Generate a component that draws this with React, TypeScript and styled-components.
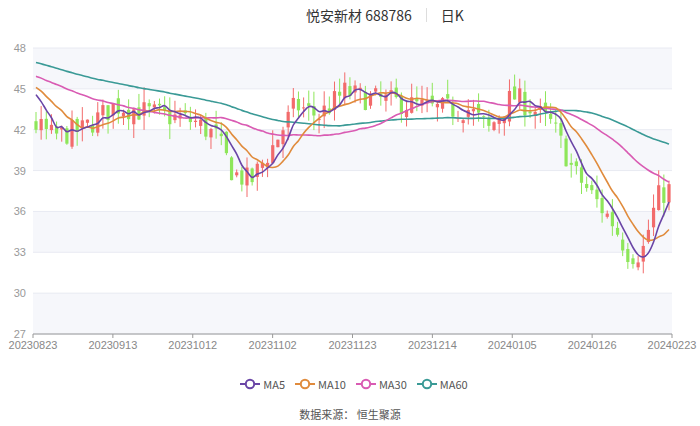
import React from "react";
import styled, { createGlobalStyle } from "styled-components";

const Global = createGlobalStyle`
  body { margin: 0; background: #fff; font-family: "Noto Sans CJK SC", "Liberation Sans", sans-serif; }
`;
const Page = styled.div`width:700px;height:426px;position:relative;overflow:hidden;`;
const Title = styled.div`
  height:30px;display:flex;align-items:center;justify-content:center;gap:14px;
  padding-left:70px;font-size:14px;color:#333;
`;
const Sep = styled.span`width:1px;height:14px;background:#ddd;`;
const Chart = styled.svg`display:block;`;
const Legend = styled.div`
  display:flex;justify-content:center;gap:10px;margin-top:0;font-size:11px;color:#555;padding-left:8px;
`;
const LegItem = styled.div`display:flex;align-items:center;gap:3px;`;
const Source = styled.div`text-align:center;font-size:11px;color:#555;margin-top:14px;`;

const X0 = 33, X1 = 672;
const yOf = (p: number) => 48 + (48 - p) * (286 / 21);
const N = 124;
const keys: [number, number][] = [
  [33, 42.3], [50, 41.5], [80, 42], [113, 43.8], [150, 43.2], [193, 42.6], [215, 41.5], [232, 38.8], [250, 38.2],
  [274, 41], [295, 43.8], [318, 43], [345, 44.8], [360, 44.4], [400, 44], [434, 43.5], [470, 43.5], [490, 42],
  [514, 44.5], [535, 43.5], [555, 42.3], [575, 39], [594, 37.2], [615, 35.2], [632, 32.8], [645, 33], [660, 37], [672, 37.6],
];
let seed = 7;
const rnd = () => { seed = (seed * 16807) % 2147483647; return seed / 2147483647; };
const base = (i: number) => {
  const x = X0 + (i / (N - 1)) * (X1 - X0);
  for (let k = 0; k < keys.length - 1; k++) {
    if (x >= keys[k][0] && x <= keys[k + 1][0]) {
      const t = (x - keys[k][0]) / (keys[k + 1][0] - keys[k][0]);
      return keys[k][1] + t * (keys[k + 1][1] - keys[k][1]);
    }
  }
  return keys[keys.length - 1][1];
};
const hist: number[] = [];
for (let i = 0; i < 60; i++) hist.push(48.8 - i * 0.06 + (rnd() - 0.5));
const closes: number[] = [];
const candles: { o: number; c: number; h: number; l: number }[] = [];
let prev = 42.6;
for (let i = 0; i < N; i++) {
  const c = base(i) + (rnd() - 0.5) * 1.8;
  const o = prev + (rnd() - 0.5) * 0.8;
  const h = Math.max(o, c) + rnd() * 1.1;
  const l = Math.min(o, c) - rnd() * 1.1;
  candles.push({ o, c, h, l });
  closes.push(c);
  prev = c;
}
const all = [...hist, ...closes];
const ma = (n: number) =>
  closes.map((_, i) => {
    const j = i + 60;
    let s = 0;
    for (let k = j - n + 1; k <= j; k++) s += all[k];
    return s / n;
  });
const xOf = (i: number) => X0 + 3 + (i / (N - 1)) * (X1 - X0 - 6);
const path = (arr: number[]) => {
  const pts = arr.map((v, i) => [xOf(i), yOf(v)]);
  let d = `M${pts[0][0]},${pts[0][1]}`;
  for (let i = 1; i < pts.length; i++) {
    const p0 = pts[Math.max(0, i - 2)], p1 = pts[i - 1], p2 = pts[i], p3 = pts[Math.min(pts.length - 1, i + 1)];
    const c1x = p1[0] + (p2[0] - p0[0]) / 6, c1y = p1[1] + (p2[1] - p0[1]) / 6;
    const c2x = p2[0] - (p3[0] - p1[0]) / 6, c2y = p2[1] - (p3[1] - p1[1]) / 6;
    d += ` C${c1x},${c1y} ${c2x},${c2y} ${p2[0]},${p2[1]}`;
  }
  return d;
};
const lines = [
  { n: 60, color: "#3a9a96", name: "MA60" },
  { n: 30, color: "#d95bb3", name: "MA30" },
  { n: 10, color: "#e08b3c", name: "MA10" },
  { n: 5, color: "#6a45a6", name: "MA5" },
];
const levels = [48, 45, 42, 39, 36, 33, 30, 27];
const dates = ["20230823", "20230913", "20231012", "20231102", "20231123", "20231214", "20240105", "20240126", "20240223"];

export default function App() {
  return (
    <Page>
      <Global />
      <Title>
        <span>悦安新材 688786</span>
        <Sep />
        <span>日K</span>
      </Title>
      <Chart width={700} height={346} viewBox="0 30 700 346">
        {levels.slice(0, -1).map((v, i) => (
          <rect key={v} x={X0} y={yOf(v)} width={X1 - X0} height={yOf(v - 3) - yOf(v)} fill={i % 2 === 0 ? "#f6f7fb" : "#fff"} />
        ))}
        {levels.map((v) => (
          <g key={v}>
            <line x1={X0} x2={X1} y1={yOf(v)} y2={yOf(v)} stroke="#e8eaf2" />
            <text x={26} y={yOf(v) + 4} fontSize={11} fill="#999" textAnchor="end" fontFamily="Liberation Sans">{v}</text>
          </g>
        ))}
        <line x1={X0} x2={X1} y1={yOf(27)} y2={yOf(27)} stroke="#999" />
        {dates.map((d, i) => {
          const x = X0 + i * (X1 - X0) / 8;
          return (
            <g key={d}>
              <line x1={x} x2={x} y1={yOf(27)} y2={yOf(27) + 4} stroke="#999" />
              <text x={x} y={yOf(27) + 15} fontSize={11} fill="#888" textAnchor="middle" fontFamily="Liberation Sans">{d}</text>
            </g>
          );
        })}
        {candles.map((c, i) => {
          const up = c.c >= c.o;
          const col = up ? "#f26b6b" : "#8ee65a";
          const x = xOf(i);
          const top = yOf(Math.max(c.o, c.c));
          const bot = yOf(Math.min(c.o, c.c));
          return (
            <g key={i}>
              <line x1={x} x2={x} y1={yOf(c.h)} y2={yOf(c.l)} stroke={col} strokeWidth={1} />
              <rect x={x - 1.6} y={top} width={3.2} height={Math.max(1, bot - top)} fill={col} />
            </g>
          );
        })}
        {lines.map((l) => (
          <path key={l.n} d={path(ma(l.n))} fill="none" stroke={l.color} strokeWidth={1.6} />
        ))}
      </Chart>
      <Legend>
        {[...lines].reverse().map((l) => (
          <LegItem key={l.name}>
            <svg width={20} height={12}>
              <line x1={0} x2={20} y1={6} y2={6} stroke={l.color} strokeWidth={2} />
              <circle cx={10} cy={6} r={4.2} fill="#fff" stroke={l.color} strokeWidth={2} />
            </svg>
            <span>{l.name}</span>
          </LegItem>
        ))}
      </Legend>
      <Source>数据来源： 恒生聚源</Source>
    </Page>
  );
}
